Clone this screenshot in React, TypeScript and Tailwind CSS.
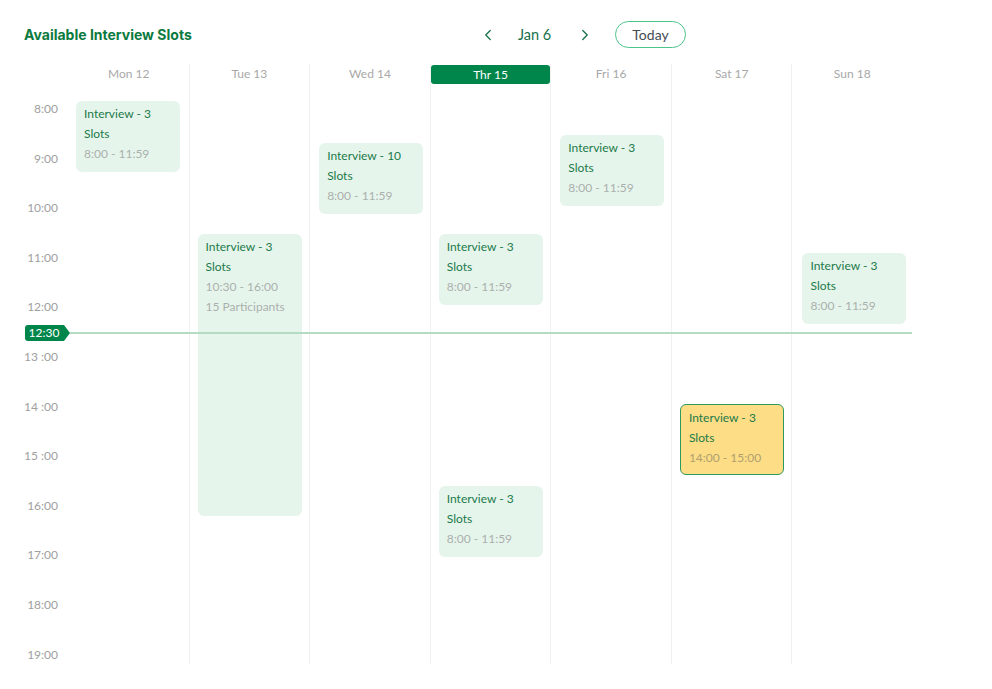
import React from "react";
import { ChevronLeft, ChevronRight } from "lucide-react";

type Slot = {
  top: number;
  left: number;
  height: number;
  title: string;
  lines: string[];
  yellow?: boolean;
};

const days: { label: string; today?: boolean; slots: Slot[] }[] = [
  { label: "Mon 12", slots: [{ top: 17, left: 7, height: 71, title: "Interview - 3", lines: ["8:00 - 11:59"] }] },
  {
    label: "Tue 13",
    slots: [{ top: 150, left: 8, height: 282, title: "Interview - 3", lines: ["10:30 - 16:00", "15 Participants"] }],
  },
  { label: "Wed 14", slots: [{ top: 59, left: 9, height: 71, title: "Interview - 10", lines: ["8:00 - 11:59"] }] },
  {
    label: "Thr 15",
    today: true,
    slots: [
      { top: 150, left: 8, height: 71, title: "Interview - 3", lines: ["8:00 - 11:59"] },
      { top: 402, left: 8, height: 71, title: "Interview - 3", lines: ["8:00 - 11:59"] },
    ],
  },
  { label: "Fri 16", slots: [{ top: 51, left: 9, height: 71, title: "Interview - 3", lines: ["8:00 - 11:59"] }] },
  {
    label: "Sat 17",
    slots: [{ top: 320, left: 8, height: 71, title: "Interview - 3", lines: ["14:00 - 15:00"], yellow: true }],
  },
  { label: "Sun 18", slots: [{ top: 169, left: 10, height: 71, title: "Interview - 3", lines: ["8:00 - 11:59"] }] },
];

const hours = ["8:00", "9:00", "10:00", "11:00", "12:00", "13 :00", "14 :00", "15 :00", "16:00", "17:00", "18:00", "19:00"];

export default function App() {
  return (
    <div
      className="relative w-[992px] h-[689px] bg-white overflow-hidden"
      style={{ fontFamily: "Lato, 'Open Sans', sans-serif" }}
    >
      {/* Header */}
      <div className="flex items-center pl-[24px] pt-[21px] h-[48px]">
        <h1 className="text-[14px] font-bold text-[#0b7a3e] leading-[27px] w-[455px]" style={{ fontFamily: "Inter, sans-serif" }}>
          Available Interview Slots
        </h1>
        <div className="flex items-center">
          <ChevronLeft size={18} strokeWidth={1.7} className="text-[#17704a]" />
          <span className="ml-[21px] w-[58px] text-[14.5px] text-[#17704a]">Jan 6</span>
          <ChevronRight size={18} strokeWidth={1.7} className="text-[#17704a]" />
          <button className="ml-[21px] w-[71px] h-[27px] rounded-full border border-[#4cc48a] text-[14px] text-[#444b55] flex items-center justify-center">
            Today
          </button>
        </div>
      </div>

      {/* Calendar */}
      <div className="flex mt-[16px] w-[912px]">
        {/* Time gutter */}
        <div className="relative w-[69px] shrink-0 h-[600px]">
          {hours.map((h, i) => (
            <div
              key={h}
              className="absolute right-[11px] text-[12px] leading-[16px] text-[#a0a0a0]"
              style={{ top: 20 + 17 + i * 49.6 }}
            >
              {h}
            </div>
          ))}
        </div>
        {/* Day columns */}
        <div className="flex flex-1 h-[600px]">
          {days.map((d, i) => (
            <div key={d.label} className={"flex-1 flex flex-col " + (i > 0 ? "border-l border-[#f1f1f1]" : "")}>
              <div className="h-[20px] flex items-center justify-center">
                {d.today ? (
                  <div className="w-full h-[19px] mt-[1px] rounded-[3px] bg-[#00854a] text-white text-[12px] flex items-center justify-center">
                    {d.label}
                  </div>
                ) : (
                  <span className="text-[12px] text-[#a8a8a8]">{d.label}</span>
                )}
              </div>
              <div className="relative flex-1">
                {d.slots.map((s, k) => (
                  <div
                    key={k}
                    className={
                      "absolute w-[104px] rounded-[6px] pl-[8px] pt-[3px] text-[12px] leading-[20px] " +
                      (s.yellow ? "bg-[#fddd85] border border-[#2f9a5e]" : "bg-[#e6f5ec]")
                    }
                    style={{ top: s.top, left: s.left, height: s.height }}
                  >
                    <div className="text-[#1c7a4a] pr-[4px]">{s.title}</div>
                    <div className="text-[#1c7a4a]">Slots</div>
                    {s.lines.map((l) => (
                      <div key={l} className={s.yellow ? "text-[#b0a070]" : "text-[#abb0ac]"}>
                        {l}
                      </div>
                    ))}
                  </div>
                ))}
              </div>
            </div>
          ))}
        </div>
      </div>

      {/* Current time indicator */}
      <div className="absolute left-[25px] top-[325px] flex items-center">
        <div className="h-[16px] w-[38px] rounded-l-[3px] bg-[#00854a] text-white text-[12px] flex items-center justify-center">
          12:30
        </div>
        <svg width="7" height="16" viewBox="0 0 7 16">
          <polygon points="0,0 1,0 7,8 1,16 0,16" fill="#00854a" />
        </svg>
        <div className="w-[842px] h-[1.5px] bg-[#b4dcc5]" />
      </div>
    </div>
  );
}
